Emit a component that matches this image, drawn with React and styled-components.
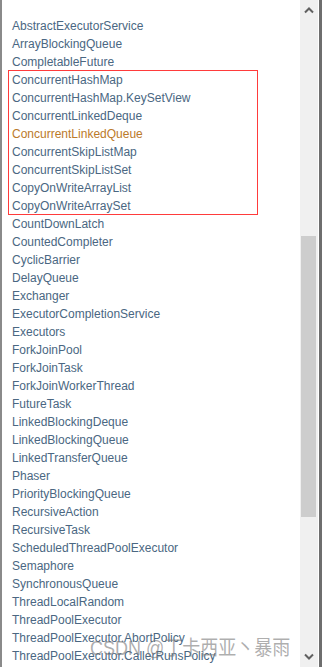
import React from 'react';
import styled, { createGlobalStyle } from 'styled-components';

const GlobalStyle = createGlobalStyle`
  html, body {
    margin: 0;
    padding: 0;
    background: #ffffff;
  }
`;

const Page = styled.div`
  width: 327px;
  height: 667px;
  overflow: hidden;
  display: flex;
  background: #ffffff;
  position: relative;
`;

const Frame = styled.div`
  display: flex;
  width: 322px;
  height: 667px;
  border-left: 2px solid #8a8a8a;
  border-right: 3px solid #6e6e6e;
  box-sizing: border-box;
`;

const ListPanel = styled.div`
  flex: 1;
  position: relative;
  padding: 17px 0 0 10px;
  overflow: hidden;
`;

const ClassList = styled.ul`
  list-style: none;
  margin: 0;
  padding: 0;
`;

const ClassItem = styled.li`
  height: 18px;
  line-height: 18px;
  font-family: "Liberation Sans", Arial, sans-serif;
  font-size: 12px;
  color: ${props => props.hover ? '#bb7a2a' : '#4a6782'};
  white-space: nowrap;
`;

const Highlight = styled.div`
  position: absolute;
  left: 6px;
  top: 70px;
  width: 250px;
  height: 145px;
  border: 1px solid #ff3b3b;
  box-sizing: border-box;
  pointer-events: none;
`;

const Scrollbar = styled.div`
  width: 18px;
  margin-right: 1px;
  background: #f0f0f0;
  display: flex;
  flex-direction: column;
`;

const ArrowButton = styled.div`
  height: 21px;
  display: flex;
  align-items: center;
  justify-content: center;
  color: #606060;
`;

const Track = styled.div`
  flex: 1;
  display: flex;
  flex-direction: column;
  padding: 0 2px 0 1px;
`;

const Thumb = styled.div`
  margin-top: ${props => props.offset}px;
  height: ${props => props.size}px;
  background: #cdcdcd;
`;

const Watermark = styled.div`
  position: absolute;
  left: 90px;
  top: 635px;
  font-family: "Liberation Sans", "Noto Sans CJK SC", sans-serif;
  font-size: 18px;
  line-height: 22px;
  color: rgba(120, 120, 120, 0.6);
  white-space: nowrap;
  transform: scaleY(1.15);
  transform-origin: left top;
  pointer-events: none;
`;

const classes = [
  'AbstractExecutorService',
  'ArrayBlockingQueue',
  'CompletableFuture',
  'ConcurrentHashMap',
  'ConcurrentHashMap.KeySetView',
  'ConcurrentLinkedDeque',
  'ConcurrentLinkedQueue',
  'ConcurrentSkipListMap',
  'ConcurrentSkipListSet',
  'CopyOnWriteArrayList',
  'CopyOnWriteArraySet',
  'CountDownLatch',
  'CountedCompleter',
  'CyclicBarrier',
  'DelayQueue',
  'Exchanger',
  'ExecutorCompletionService',
  'Executors',
  'ForkJoinPool',
  'ForkJoinTask',
  'ForkJoinWorkerThread',
  'FutureTask',
  'LinkedBlockingDeque',
  'LinkedBlockingQueue',
  'LinkedTransferQueue',
  'Phaser',
  'PriorityBlockingQueue',
  'RecursiveAction',
  'RecursiveTask',
  'ScheduledThreadPoolExecutor',
  'Semaphore',
  'SynchronousQueue',
  'ThreadLocalRandom',
  'ThreadPoolExecutor',
  'ThreadPoolExecutor.AbortPolicy',
  'ThreadPoolExecutor.CallerRunsPolicy',
];

const Chevron = ({ down }) => (
  <svg width="10" height="7" viewBox="0 0 10 7">
    <path
      d={down ? 'M1 1.5 L5 5.5 L9 1.5' : 'M1 5.5 L5 1.5 L9 5.5'}
      fill="none"
      stroke="currentColor"
      strokeWidth="2"
    />
  </svg>
);

const App = () => {
  return (
    <Page>
      <GlobalStyle />
      <Frame>
        <ListPanel>
          <ClassList>
            {classes.map(name => (
              <ClassItem key={name} hover={name === 'ConcurrentLinkedQueue'}>
                {name}
              </ClassItem>
            ))}
          </ClassList>
          <Highlight />
        </ListPanel>
        <Scrollbar>
          <ArrowButton>
            <Chevron />
          </ArrowButton>
          <Track>
            <Thumb offset={215} size={281} />
          </Track>
          <ArrowButton>
            <Chevron down />
          </ArrowButton>
        </Scrollbar>
      </Frame>
      <Watermark>CSDN @丁卡西亚丶暴雨</Watermark>
    </Page>
  );
};

export default App;
